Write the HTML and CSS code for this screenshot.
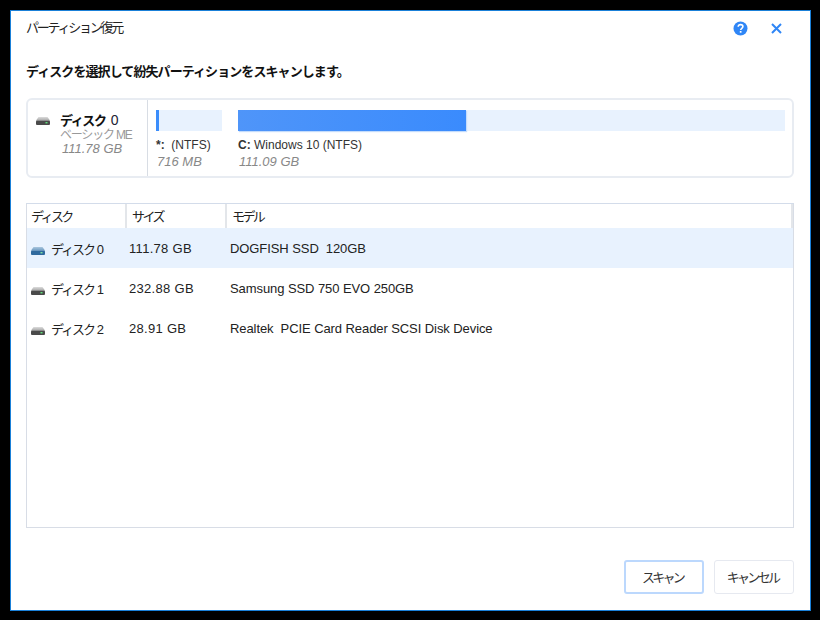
FILE: index.html
```html
<!DOCTYPE html>
<html lang="ja">
<head>
<meta charset="utf-8">
<title>パーティション復元</title>
<link rel="stylesheet" href="styles.css">
</head>
<body>
<main class="dialog">
  <header class="titlebar">
    <span class="title">パーティション復元</span>
    <div class="title-actions">
      <svg class="icon-help" width="15" height="15" viewBox="0 0 15 15"><circle cx="7.5" cy="7.5" r="7" fill="#2f86f6"/><path d="M5.2 5.8c0-1.4 1-2.2 2.4-2.2s2.3.8 2.3 2c0 1.7-2.2 1.7-2.2 3.4" fill="none" stroke="#fff" stroke-width="1.6"/><rect x="6.8" y="10" width="1.7" height="1.7" fill="#fff"/></svg>
      <svg class="icon-close" width="11" height="11" viewBox="0 0 11 11"><path d="M1 1l9 9M10 1l-9 9" fill="none" stroke="#2f86f6" stroke-width="2"/></svg>
    </div>
  </header>
  <h1 class="heading">ディスクを選択して紛失パーティションをスキャンします。</h1>

  <section class="disk-panel">
    <div class="disk-info">
      <svg class="hdd" width="14" height="8" viewBox="0 0 14 8"><use href="#hdd-gray"/></svg>
      <div class="disk-text">
        <div class="disk-name">ディスク <span class="num">0</span></div>
        <div class="disk-sub">ベーシック ME</div>
        <div class="disk-size">111.78 GB</div>
      </div>
    </div>
    <div class="partitions">
      <div class="partition p-small">
        <div class="bar"><div class="fill fill-small"></div></div>
        <div class="p-label"><b class="drive">*:</b>&nbsp; (NTFS)</div>
        <div class="p-size">716 MB</div>
      </div>
      <div class="partition p-large">
        <div class="bar"><div class="fill fill-large"></div></div>
        <div class="p-label"><b class="drive">C:</b> Windows 10 (NTFS)</div>
        <div class="p-size">111.09 GB</div>
      </div>
    </div>
  </section>

  <section class="table">
    <div class="thead">
      <div class="th col-a">ディスク</div>
      <div class="th col-b">サイズ</div>
      <div class="th col-c">モデル</div>
    </div>
    <div class="row selected">
      <div class="cell col-a"><svg class="hdd" width="14" height="8" viewBox="0 0 14 8"><use href="#hdd-blue"/></svg>ディスク 0</div>
      <div class="cell col-b">111.78 GB</div>
      <div class="cell col-c">DOGFISH SSD&nbsp; 120GB</div>
    </div>
    <div class="row">
      <div class="cell col-a"><svg class="hdd" width="14" height="8" viewBox="0 0 14 8"><use href="#hdd-gray"/></svg>ディスク 1</div>
      <div class="cell col-b">232.88 GB</div>
      <div class="cell col-c">Samsung SSD 750 EVO 250GB</div>
    </div>
    <div class="row">
      <div class="cell col-a"><svg class="hdd" width="14" height="8" viewBox="0 0 14 8"><use href="#hdd-gray"/></svg>ディスク 2</div>
      <div class="cell col-b">28.91 GB</div>
      <div class="cell col-c">Realtek&nbsp; PCIE Card Reader SCSI Disk Device</div>
    </div>
  </section>

  <footer class="actions">
    <button class="btn btn-primary">スキャン</button>
    <button class="btn">キャンセル</button>
  </footer>
</main>
<svg class="defs" width="0" height="0"><defs>
  <linearGradient id="top-gray" x1="0" y1="0" x2="0" y2="1"><stop offset="0" stop-color="#dcdcdc"/><stop offset="1" stop-color="#a8a8a8"/></linearGradient>
  <linearGradient id="top-blue" x1="0" y1="0" x2="0" y2="1"><stop offset="0" stop-color="#a9c6de"/><stop offset="1" stop-color="#6f9cc2"/></linearGradient>
  <g id="hdd-gray"><path d="M2.5 0h9L14 3.5H0z" fill="url(#top-gray)"/><rect y="3.5" width="14" height="4.5" rx="1" fill="#4a4a4a"/><rect x="9.5" y="5" width="2" height="1.4" fill="#5fe07a"/></g>
  <g id="hdd-blue"><path d="M2.5 0h9L14 3.5H0z" fill="url(#top-blue)"/><rect y="3.5" width="14" height="4.5" rx="1" fill="#2f6a9e"/><rect x="9.5" y="5" width="2" height="1.4" fill="#7fe0a0"/></g>
</defs></svg>
</body>
</html>
```
FILE: styles.css
```css
* { box-sizing: border-box; }
html, body { margin: 0; height: 100%; }
body {
  background: #000;
  padding: 10px;
  font-family: "Liberation Sans", "Noto Sans CJK JP", sans-serif;
  font-size: 12px;
  color: #222;
  overflow: hidden;
}
.dialog {
  width: 801px;
  height: 601px;
  background: #fff;
  border: 1px solid #1a80d8;
  padding: 0 15px;
  display: flex;
  flex-direction: column;
}
.titlebar {
  height: 34px;
  display: flex;
  align-items: center;
  justify-content: space-between;
  flex: none;
}
.title { font-size: 13px; letter-spacing: -2.25px; padding-bottom: 3px; }
.title-actions {
  display: flex;
  align-items: center;
  gap: 23px;
  padding-right: 13px;
}
.heading {
  margin: 17px 0 0;
  height: 20px;
  font-size: 13px;
  line-height: 20px;
  font-weight: 700;
  letter-spacing: -0.92px;
  color: #111;
  flex: none;
}
.disk-panel {
  margin-top: 16px;
  width: 768px;
  height: 80px;
  flex: none;
  border: 2px solid #e8ecf2;
  border-radius: 6px;
  display: flex;
}
.disk-info {
  width: 120px;
  border-right: 1px solid #d8dde4;
  display: flex;
  padding: 12px 0 0 8px;
  flex: none;
}
.disk-info .hdd { margin-top: 5px; margin-right: 10px; }
.disk-name { font-weight: 700; font-size: 13px; line-height: 17px; color: #111; letter-spacing: -1.4px; word-spacing: 3px; }
.num { color: #223; font-weight: 400; font-size: 14px; }
.disk-sub { color: #999; line-height: 13px; letter-spacing: -1.2px; }
.disk-size { color: #888; font-style: italic; font-size: 13px; line-height: 14px; margin-left: 2px; }
.partitions { display: flex; padding: 10px 0 0 8px; gap: 16px; flex: 1; }
.p-small { width: 66px; flex: none; }
.p-large { width: 547px; flex: none; }
.bar { height: 21px; background: #e8f2fe; }
.fill { height: 100%; }
.fill-small { width: 3px; background: #3b8dfb; }
.fill-large {
  width: 228px;
  background: linear-gradient(90deg, #4f95f9, #3a8bfd);
  box-shadow: 1px 1px 1px #c4dcfb;
}
.p-label { margin-top: 6px; line-height: 16px; color: #333; white-space: nowrap; }
.drive { color: #333; }
.p-size { margin-top: 1px; line-height: 16px; color: #888; font-style: italic; font-size: 13px; margin-left: 1px; }
.table {
  margin-top: 25px;
  width: 768px;
  height: 325px;
  flex: none;
  border: 1px solid #d8dde6;
  border-top-color: #d3dcea;
}
.thead { display: flex; height: 24px; }
.th {
  font-size: 13px;
  line-height: 25px;
  padding-left: 4px;
  border-right: 2px solid #e3e6ea;
  color: #222;
  letter-spacing: -2.6px;
}
.col-a { width: 100px; flex: none; }
.col-b { width: 100px; flex: none; padding-left: 5px; }
.col-c { flex: 1; padding-left: 5px; }
.row { display: flex; height: 40px; align-items: center; color: #222; font-size: 13px; }
.row.selected { background: #e8f2fe; }
.cell { padding-left: 2px; white-space: nowrap; }
.cell.col-b { letter-spacing: 0.3px; }
.cell.col-c { padding-left: 3px; letter-spacing: -0.08px; }
.cell.col-a { padding-left: 4px; display: flex; align-items: center; letter-spacing: -2px; word-spacing: 1px; }
.cell .hdd { margin-right: 6px; margin-top: 6px; }
.actions {
  margin-top: 32px;
  width: 768px;
  display: flex;
  justify-content: flex-end;
  gap: 10px;
  flex: none;
}
.btn {
  width: 80px;
  height: 34px;
  background: #fff;
  border: 1px solid #e6e9f0;
  border-radius: 3px;
  font: inherit;
  font-size: 13px;
  color: #333;
  letter-spacing: -2.7px;
  padding: 0 3px 2px 0;
}
.btn-primary { border: 2px solid #bcd8fd; }
.defs { position: absolute; }
```
